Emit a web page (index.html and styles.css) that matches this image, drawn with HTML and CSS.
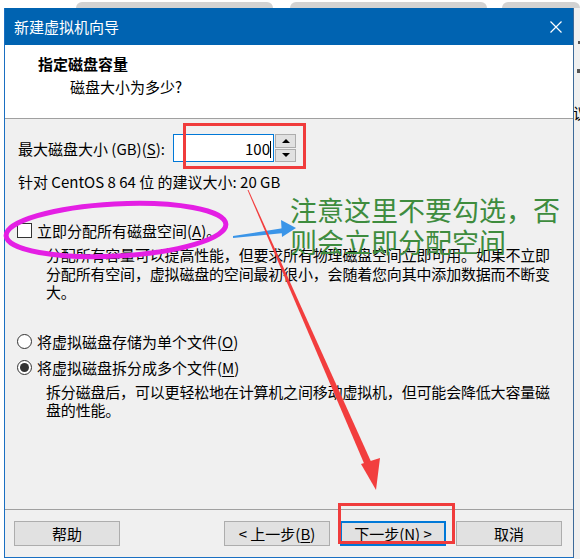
FILE: index.html
```html
<!DOCTYPE html>
<html lang="zh-CN">
  <head>
    <meta charset="UTF-8" />
    <title>新建虚拟机向导</title>
    <link rel="stylesheet" href="styles.css">
  </head>
  <body>
    <div class="tabs">
      <div class="tab t1"></div>
      <div class="tab t2"></div>
      <div class="tab t3"></div>
    </div>
    <div class="main">
      <div class="dialog">
        <div class="titlebar">
          <span>新建虚拟机向导</span>
          <svg class="close" width="12" height="12" viewBox="0 0 12 12">
            <path d="M0.5 0.5 L11.5 11.5 M11.5 0.5 L0.5 11.5" stroke="#fff" stroke-width="1.2" fill="none"/>
          </svg>
        </div>
        <div class="head">
          <div class="h1">指定磁盘容量</div>
          <div class="h2">磁盘大小为多少?</div>
        </div>
        <div class="content">
          <div class="size-row">
            <label class="size-label">最大磁盘大小 (GB)(<u>S</u>):</label>
            <div class="input">100<span class="caret"></span></div>
            <div class="spin">
              <div class="sb"><span class="up"></span></div>
              <div class="sb"><span class="down"></span></div>
            </div>
          </div>
          <div class="hint">针对 CentOS 8 64 位 的建议大小: 20 GB</div>
          <div class="opt first">
            <span class="check"></span>立即分配所有磁盘空间(<u>A</u>)。
          </div>
          <div class="desc">分配所有容量可以提高性能，但要求所有物理磁盘空间立即可用。如果不立即<br>分配所有空间，虚拟磁盘的空间最初很小，会随着您向其中添加数据而不断变<br>大。</div>
          <div class="opt radio-one">
            <span class="radio"></span>将虚拟磁盘存储为单个文件(<u>O</u>)
          </div>
          <div class="opt radio-two">
            <span class="radio on"></span>将虚拟磁盘拆分成多个文件(<u>M</u>)
          </div>
          <div class="desc">拆分磁盘后，可以更轻松地在计算机之间移动虚拟机，但可能会降低大容量磁<br>盘的性能。</div>
        </div>
        <div class="footer">
          <button class="btn">帮助</button>
          <div class="spacer"></div>
          <button class="btn">&lt; 上一步(<u>B</u>)</button>
          <button class="btn next">下一步(<u>N</u>) &gt;</button>
          <button class="btn">取消</button>
        </div>
      </div>
      <div class="side">
        <span class="m1"></span>
        <span class="m2"></span>
        <span class="m3">议</span>
      </div>
    </div>

    <!-- hand drawn notes on top of the screenshot -->
    <svg class="marks" width="580" height="559" viewBox="0 0 580 559">
      <rect x="184.5" y="124.5" width="120" height="43" fill="none" stroke="#f03c3c" stroke-width="3"/>
      <rect x="339.5" y="504.5" width="114" height="38" fill="none" stroke="#f03c3c" stroke-width="3"/>
      <ellipse cx="116" cy="230" rx="110" ry="26" transform="rotate(-3 116 230)" fill="none" stroke="#e41fe4" stroke-width="5"/>
      <polygon points="233,236 233,238 284,233 284,228" fill="#3b95e8"/>
      <polygon points="281,220 296,228 282,237" fill="#3b95e8"/>
      <polygon points="247.5,190 248.5,190 373,466 366,468" fill="#f23e3e"/>
      <polygon points="361,464 380,458 376,490" fill="#f23e3e"/>
    </svg>
    <div class="note">注意这里不要勾选，否<br>则会立即分配空间</div>
  </body>
</html>
```

FILE: styles.css
```css
* {
  margin: 0;
  padding: 0;
  box-sizing: border-box;
}
body {
  width: 580px;
  height: 559px;
  overflow: hidden;
  background: #fff;
  font-family: "Noto Sans CJK SC", "Liberation Sans", sans-serif;
  font-size: 15px;
  color: #000;
  position: relative;
}
u {
  text-decoration: underline;
  text-underline-offset: 2px;
}

/* tabs of the browser behind */
.tabs {
  height: 8px;
  display: flex;
  align-items: flex-end;
}
.tab {
  height: 6px;
  background: #d2d2d2;
  border-radius: 6px 6px 0 0;
}
.t1 {
  margin-left: 76px;
  width: 197px;
}
.t2 {
  margin-left: 17px;
  width: 197px;
}
.t3 {
  margin-left: 15px;
  flex: 1;
}

.main {
  display: flex;
  height: 551px;
}
.dialog {
  margin-left: 4px;
  width: 570px;
  height: 550px;
  border: 1px solid #1a6fc2;
  border-top: none;
  border-right-color: #3d6a99;
  background: #f0f0f0;
  display: flex;
  flex-direction: column;
}
.titlebar {
  height: 37px;
  background: #0063b1;
  color: #fff;
  display: flex;
  align-items: center;
  justify-content: space-between;
  padding: 0 10px 0 9px;
  line-height: 20px;
}
.close {
  margin-right: 1px;
}
.head {
  height: 74px;
  background: #fff;
  border-bottom: 1px solid #a0a0a0;
  padding: 9px 0 0 33px;
  line-height: 20px;
}
.h1 {
  font-weight: bold;
}
.h2 {
  margin: 3px 0 0 32px;
}

.content {
  height: 391px;
  padding: 15px 0 0 13px;
  border-bottom: 1px solid #a0a0a0;
  line-height: 19px;
}
.size-row {
  display: flex;
  align-items: center;
  height: 28px;
}
.size-label {
  width: 155px;
}
.input {
  width: 101px;
  height: 28px;
  background: #fff;
  border: 1px solid #0078d7;
  text-align: right;
  padding: 4px 2px 0 0;
  line-height: 19px;
}
.caret {
  display: inline-block;
  width: 1px;
  height: 17px;
  background: #000;
  vertical-align: -3px;
}
.spin {
  margin-left: 1px;
  width: 21px;
  height: 28px;
  display: flex;
  flex-direction: column;
  gap: 1px;
}
.sb {
  flex: 1;
  background: #e1e1e1;
  border: 1px solid #adadad;
  display: flex;
  align-items: center;
  justify-content: center;
}
.up {
  border-left: 4px solid transparent;
  border-right: 4px solid transparent;
  border-bottom: 4px solid #000;
}
.down {
  border-left: 4px solid transparent;
  border-right: 4px solid transparent;
  border-top: 4px solid #000;
}
.hint {
  margin-top: 10px;
}
.opt {
  display: flex;
  align-items: center;
  height: 19px;
}
.opt.first {
  margin-top: 30px;
}
.check {
  width: 15px;
  height: 15px;
  border: 1px solid #333;
  background: #fff;
  margin: 0 5px 0 -1px;
}
.radio {
  width: 15px;
  height: 15px;
  border: 1px solid #333;
  border-radius: 50%;
  background: #fff;
  margin: 0 5px 0 -1px;
  display: flex;
  align-items: center;
  justify-content: center;
}
.radio.on::after {
  content: "";
  width: 9px;
  height: 9px;
  border-radius: 50%;
  background: #333;
}
.desc {
  margin: 6px 0 0 28px;
  line-height: 18.5px;
  letter-spacing: -0.18px;
  white-space: nowrap;
}
.radio-one {
  margin-top: 30px;
}
.radio-two {
  margin-top: 7px;
}

.footer {
  flex: 1;
  display: flex;
  padding: 11px 0 0 9px;
}
.spacer {
  width: 94px;
}
.btn {
  width: 106px;
  height: 25px;
  background: #e1e1e1;
  border: 1px solid #adadad;
  font-family: "Noto Sans CJK SC", "Liberation Sans", sans-serif;
  font-size: 15px;
  line-height: 20px;
  color: #000;
  margin-right: 10px;
}
.btn.next {
  border: 2px solid #0078d7;
}

.side {
  flex: 1;
  background: #f0f0f0;
  position: relative;
  overflow: hidden;
}
.side span {
  position: absolute;
  background: #555;
}
.m1 {
  left: 4px;
  top: 33px;
  width: 3px;
  height: 3px;
}
.m2 {
  left: 3px;
  top: 61px;
  width: 3px;
  height: 4px;
}
.side .m3 {
  background: none;
  left: -1px;
  top: 95px;
  font-size: 15px;
  line-height: 19px;
}

.marks {
  position: absolute;
  left: 0;
  top: 0;
  pointer-events: none;
}
.note {
  position: absolute;
  left: 290px;
  top: 194px;
  font-size: 27px;
  line-height: 32px;
  color: #3e8c3e;
  white-space: nowrap;
}
```
